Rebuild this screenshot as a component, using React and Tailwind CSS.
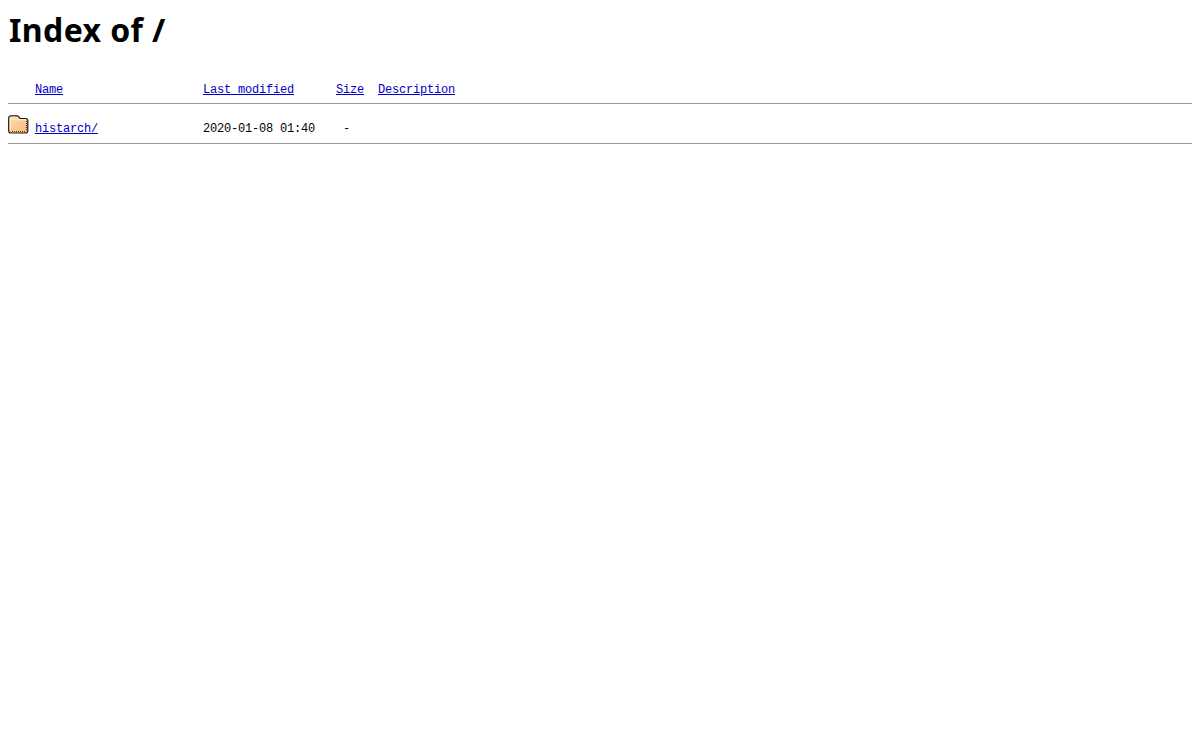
import React from 'react';

function FolderIcon() {
    return (
        <svg width="21" height="20" viewBox="0 0 21 20" className="shrink-0">
            <defs>
                <linearGradient id="folderFill" x1="0" y1="0" x2="1" y2="1">
                    <stop offset="0" stopColor="#ffd9ae" />
                    <stop offset="1" stopColor="#f8bd7c" />
                </linearGradient>
            </defs>
            <path d="M3 .8h6q1.500 0 2.300 1.400l.7 1.300h5.500q2.300 0 2.300 2.300v10q0 2.200-2.300 2.200H3q-2.300 0-2.300-2.200V3q0-2.200 2.300-2.200z" fill="url(#folderFill)" stroke="#241a0a" strokeWidth="1.200" />
            <path d="M3 2.300h5.500M2.300 3.500v11" stroke="#ffeeda" strokeWidth="1" fill="none" />
            <path d="M3.500 4.800h14.500" stroke="#fff2e2" strokeWidth="1" fill="none" />
            <path d="M18.500 6v10M4 16.500h14" stroke="#4a3518" strokeWidth="1" strokeDasharray="1 1" fill="none" />
        </svg>
    );
}

function Row({ icon, name, modified, size, description, link, className }) {
    const cell = link ? 'text-[#0000c8] underline' : 'text-black';
    return (
        <div className={`flex items-end ${className}`}>
            <div className="w-[27px] shrink-0 self-start">{icon}</div>
            <div className="w-[168px] shrink-0"><a href="#" className="text-[#0000c8] underline">{name}</a></div>
            <div className={`w-[133px] shrink-0 ${cell}`}>{modified}</div>
            <div className={`w-[42px] shrink-0 ${cell}`}>{size}</div>
            <div className={cell}>{description}</div>
        </div>
    );
}

export default function App() {
    return (
        <div className="min-h-[740px] bg-white px-2 text-black">
            <h1 className="pt-[11px] pl-px text-[32px] leading-[38px] tracking-[0.4px] font-bold font-['Noto_Sans',sans-serif]">Index of /</h1>
            <div className="mt-[32px] font-['Liberation_Mono',monospace] text-[12px] tracking-[-0.2px] leading-[16px] whitespace-pre">
                <Row name="Name" modified="Last modified" size="Size" description="Description" link className="h-[17px]" />
                <hr className="mt-[5px] border-0 border-t border-[#999]" />
                <Row icon={<FolderIcon />} name="histarch/" modified="2020-01-08 01:40" size=" -" description="" className="mt-[11px] h-[22px]" />
                <hr className="mt-[6px] border-0 border-t border-[#999]" />
            </div>
        </div>
    );
}
